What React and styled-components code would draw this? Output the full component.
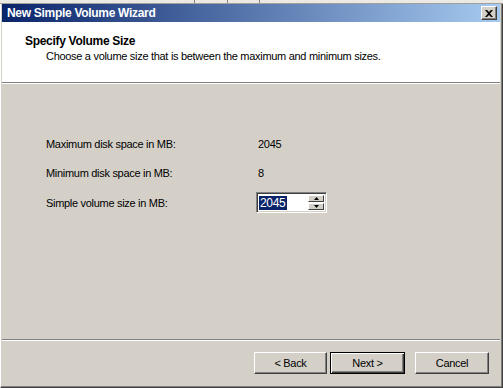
import React from "react";
import styled, { createGlobalStyle } from "styled-components";

const Global = createGlobalStyle`
  html, body { margin: 0; padding: 0; background: #d4d0c8; }
  body { font-family: "Liberation Sans", Arial, sans-serif; font-size: 11px; letter-spacing: -0.3px; }
`;

const Window = styled.div`
  width: 503px;
  height: 388px;
  display: flex;
  flex-direction: column;
  box-sizing: border-box;
  background: #d4d0c8;
  overflow: hidden;
`;

const TopStrip = styled.div`
  flex: 0 0 4px;
  box-sizing: border-box;
  border-bottom: 1px solid #a0a0a0;
  background:
    linear-gradient(#808080, #808080) 194px 0 / 1px 3px no-repeat,
    linear-gradient(#808080, #808080) 227px 0 / 1px 3px no-repeat,
    linear-gradient(#808080, #808080) 259px 0 / 1px 3px no-repeat,
    #ece9e2;
`;

const Frame = styled.div`
  flex: 1;
  display: flex;
  flex-direction: column;
  border-left: 1px solid #ffffff;
  border-right: 1px solid #404040;
  border-bottom: 1px solid #404040;
  box-shadow: inset -1px -1px 0 #808080;
  padding: 0 2px 1px 1px;
`;

const TitleBar = styled.div`
  flex: 0 0 18px;
  display: flex;
  align-items: center;
  justify-content: space-between;
  padding: 0 3px 0 5px;
  background: linear-gradient(to right, #0a246a, #a6caf0);
`;

const Title = styled.span`
  color: #fff;
  font-weight: bold;
  font-size: 12px;
`;

const CloseButton = styled.div`
  width: 16px;
  height: 14px;
  box-sizing: border-box;
  background: #d4d0c8;
  border: 1px solid;
  border-color: #fff #404040 #404040 #fff;
  box-shadow: inset -1px -1px 0 #808080;
  display: flex;
  align-items: center;
  justify-content: center;
`;

const Header = styled.div`
  flex: 0 0 61px;
  background: #fff;
  padding: 12px 0 0 23px;
  box-sizing: border-box;
  border-bottom: 1px solid #808080;
  box-shadow: 0 1px 0 #fff;
`;

const HeaderTitle = styled.div`
  font-weight: bold;
  font-size: 12px;
  color: #000;
  line-height: 14px;
`;

const HeaderSub = styled.div`
  margin: 2px 0 0 21px;
  color: #000;
  line-height: 13px;
`;

const Body = styled.div`
  flex: 1;
  padding: 53px 0 0 44px;
  margin-top: 1px;
  display: flex;
  flex-direction: column;
`;

const Row = styled.div`
  display: flex;
  align-items: center;
  height: ${(p) => p.h || 13}px;
  margin-top: ${(p) => p.top || 0}px;
`;

const Label = styled.div`
  width: 212px;
  color: #000;
`;

const Value = styled.div`
  color: #000;
`;

const Spin = styled.div`
  display: flex;
  align-items: center;
  width: 71px;
  height: 21px;
  box-sizing: border-box;
  margin-left: -2px;
  background: #fff;
  border: 1px solid;
  border-color: #808080 #fff #fff #808080;
  box-shadow: inset 1px 1px 0 #404040, inset -1px -1px 0 #d4d0c8;
  padding: 2px;
`;

const SpinText = styled.span`
  background: #0a246a;
  color: #fff;
  font-size: 12px;
  line-height: 14px;
  padding: 0 1px;
`;

const SpinButtons = styled.div`
  margin-left: auto;
  display: flex;
  flex-direction: column;
  gap: 1px;
`;

const SpinBtn = styled.div`
  width: 16px;
  height: 7px;
  box-sizing: border-box;
  background: #d4d0c8;
  border: 1px solid;
  border-color: #fff #404040 #404040 #fff;
  display: flex;
  align-items: center;
  justify-content: center;
`;

const Footer = styled.div`
  flex: 0 0 47px;
  border-top: 1px solid #808080;
  box-shadow: inset 0 1px 0 #fff;
  display: flex;
  justify-content: flex-end;
  align-items: flex-start;
  padding: 12px 11px 0 0;
  box-sizing: border-box;
`;

const Button = styled.button`
  width: ${(p) => p.w || 74}px;
  height: 22px;
  margin-left: ${(p) => p.gap || 0}px;
  font-family: "Liberation Sans", Arial, sans-serif;
  font-size: 11px;
  letter-spacing: -0.3px;
  color: #000;
  background: #d4d0c8;
  box-sizing: border-box;
  padding: 0;
  border: 1px solid;
  border-color: ${(p) => (p.primary ? "#000" : "#fff #404040 #404040 #fff")};
  box-shadow: ${(p) =>
    p.primary
      ? "inset 1px 1px 0 #fff, inset -1px -1px 0 #404040, inset -2px -2px 0 #808080"
      : "inset -1px -1px 0 #808080"};
`;

const Arrow = ({ up }) => (
  <svg width="5" height="3" viewBox="0 0 5 3">
    <path d={up ? "M2.5 0 L5 3 L0 3 Z" : "M0 0 L5 0 L2.5 3 Z"} fill="#000" />
  </svg>
);

export default function App() {
  return (
    <Window>
      <Global />
      <TopStrip />
      <Frame>
        <TitleBar>
          <Title>New Simple Volume Wizard</Title>
          <CloseButton>
            <svg width="8" height="7" viewBox="0 0 8 7">
              <path d="M0 0 L2 0 L4 2 L6 0 L8 0 L5 3.5 L8 7 L6 7 L4 5 L2 7 L0 7 L3 3.5 Z" fill="#000" />
            </svg>
          </CloseButton>
        </TitleBar>
        <Header>
          <HeaderTitle>Specify Volume Size</HeaderTitle>
          <HeaderSub>Choose a volume size that is between the maximum and minimum sizes.</HeaderSub>
        </Header>
        <Body>
          <Row>
            <Label>Maximum disk space in MB:</Label>
            <Value>2045</Value>
          </Row>
          <Row top={16}>
            <Label>Minimum disk space in MB:</Label>
            <Value>8</Value>
          </Row>
          <Row h={21} top={13}>
            <Label>Simple volume size in MB:</Label>
            <Spin>
              <SpinText>2045</SpinText>
              <SpinButtons>
                <SpinBtn><Arrow up /></SpinBtn>
                <SpinBtn><Arrow /></SpinBtn>
              </SpinButtons>
            </Spin>
          </Row>
        </Body>
        <Footer>
          <Button w={73}>&lt; Back</Button>
          <Button primary gap={3} w={75}>Next &gt;</Button>
          <Button gap={10}>Cancel</Button>
        </Footer>
      </Frame>
    </Window>
  );
}
